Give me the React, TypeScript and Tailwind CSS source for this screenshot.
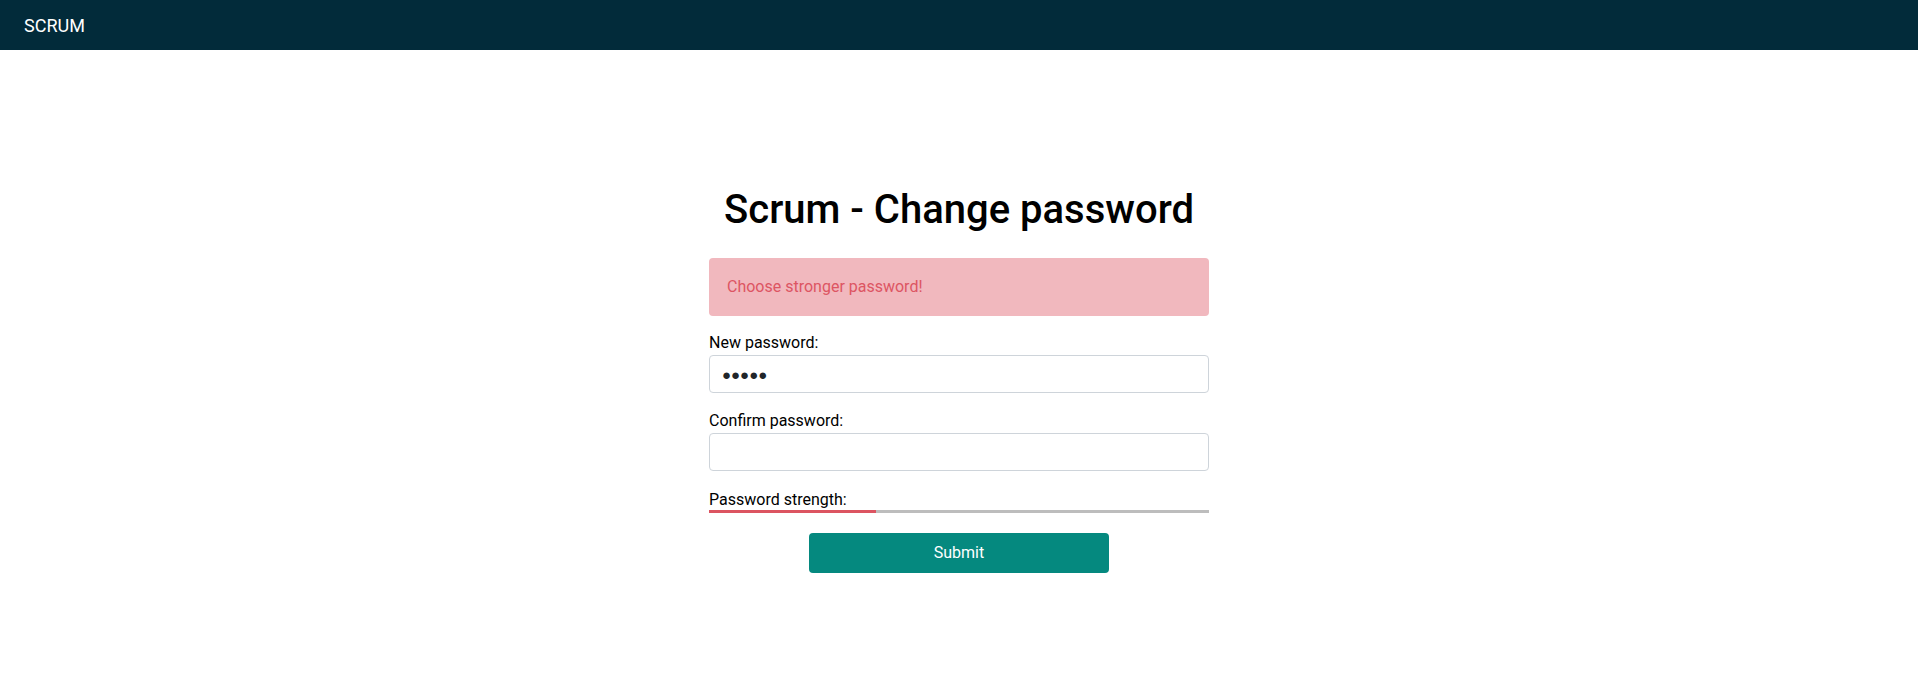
export default function App() {
  return (
    <div className="min-h-screen bg-white font-['Roboto',sans-serif] text-black">
      <nav className="flex h-[50px] items-center bg-[#022b3a] px-6">
        <span className="text-[18px] text-white">SCRUM</span>
      </nav>

      <main className="flex flex-col items-center pt-[136px]">
        <h1 className="text-[40px] font-medium leading-[48px]">Scrum - Change password</h1>

        <form className="mt-[24px] flex w-[500px] flex-col">
          <div className="flex h-[58px] items-center rounded bg-[#f1b8be] px-[18px] text-base text-[#dd5563]">
            Choose stronger password!
          </div>

          <label className="mt-[17px] text-base leading-[20px]">New password:</label>
          <input
            type="text"
            defaultValue="●●●●●"
            className="mt-[2px] h-[38px] rounded border border-[#ced4da] px-3 font-['Liberation_Sans',sans-serif] text-[15px] text-[#212529] outline-none"
          />

          <label className="mt-[18px] text-base leading-[20px]">Confirm password:</label>
          <input
            type="password"
            className="mt-[2px] h-[38px] rounded border border-[#ced4da] px-3 text-base outline-none"
          />

          <label className="mt-[19px] text-base leading-[20px]">Password strength:</label>
          <div className="flex h-[3px]">
            <div className="w-1/3 bg-[#dc5461]" />
            <div className="flex-1 bg-[#bdbdbd]" />
          </div>

          <button
            type="button"
            className="mx-auto mt-[20px] h-[40px] w-[300px] rounded bg-[#05897f] text-base text-white"
          >
            Submit
          </button>
        </form>
      </main>
    </div>
  );
}
